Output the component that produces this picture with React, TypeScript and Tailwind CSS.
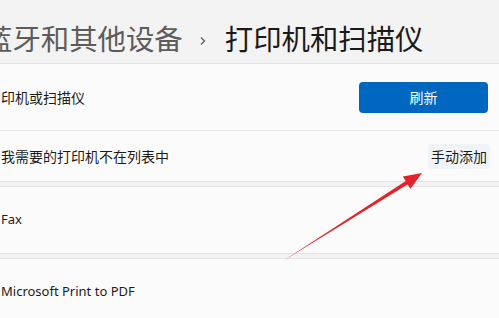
import React from 'react';

const font = { fontFamily: '"Noto Sans", "Noto Sans CJK SC", sans-serif' };

function Row({ children, right, className = '', textSize = 'text-[14px]' }: { children: React.ReactNode; right?: React.ReactNode; className?: string; textSize?: string }) {
  return (
    <div className={`flex items-center justify-between pl-[1px] ${className}`}>
      <span className={`${textSize} text-[#1b1b1b]`}>{children}</span>
      {right}
    </div>
  );
}

export default function App() {
  return (
    <div className="relative w-[499px] h-[318px] overflow-hidden bg-[#f3f3f3]" style={font}>
      <div className="h-[63px] flex items-center pt-[16px] ml-[-16px] whitespace-nowrap">
        <span className="text-[28.4px] leading-none text-[#5c5c5c]">蓝牙和其他设备</span>
        <svg className="ml-[14px] mr-[16px] mt-[2px]" width="12" height="12" viewBox="0 0 12 12">
          <path d="M4 2.5 L7.5 6 L4 9.5" fill="none" stroke="#5c5c5c" strokeWidth="1.3" />
        </svg>
        <span className="text-[28.4px] leading-none text-[#1a1a1a]">打印机和扫描仪</span>
      </div>

      <div className="border-y border-[#e5e5e5] bg-[#fbfbfb]">
        <Row
          className="h-[67px] border-b border-[#e5e5e5] pr-[11px]"
          right={
            <button className="w-[129px] h-[31px] rounded-[4px] bg-[#0067c0] text-white text-[14px]">刷新</button>
          }
        >
          印机或扫描仪
        </Row>
        <Row
          className="h-[50px] pr-[9px]"
          right={<span className="px-[3px] py-[2px] rounded-[3px] bg-[#f1f4f7] text-[14px] text-[#1b1b1b]">手动添加</span>}
        >
          我需要的打印机不在列表中
        </Row>
      </div>

      <div className="mt-[4px] border-y border-[#e5e5e5] bg-[#fbfbfb]">
        <Row className="h-[66px]" textSize="text-[13px]">Fax</Row>
      </div>

      <div className="mt-[4px] border-t border-[#e5e5e5] bg-[#fbfbfb]">
        <Row className="h-[66px]" textSize="text-[13px]">Microsoft Print to PDF</Row>
      </div>

      <svg className="absolute left-0 top-0 pointer-events-none" width="499" height="318" viewBox="0 0 499 318">
        <polygon
          points="283,261 407.5,184.5 410.5,188.8 422,173 402.8,176.5 405.8,181"
          fill="#e3232c"
        />
      </svg>
    </div>
  );
}
